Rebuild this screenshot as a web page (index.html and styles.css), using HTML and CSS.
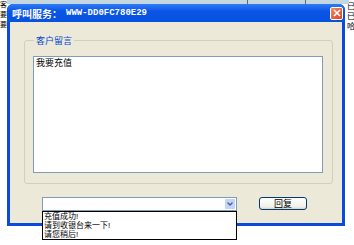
FILE: index.html
```html
<!DOCTYPE html>
<html lang="zh-CN">
<head>
    <meta charset="UTF-8">
    <title>呼叫服务</title>
    <link rel="stylesheet" href="styles.css">
</head>
<body>
    <div class="desk">
        <div class="side side-left">
            <span>客</span><span>要</span><span>要</span>
        </div>
        <div class="middle">
            <div class="grid-head">
                <span class="head-cell head-a"></span>
                <span class="head-cell head-b"></span>
            </div>
            <div class="window">
                <div class="titlebar">
                    <span class="title-cn">呼叫服务：</span>
                    <span class="title-id">WWW-DD0FC780E29</span>
                    <span class="close-btn">
                        <svg width="8" height="8" viewBox="0 0 8 8">
                            <path d="M1 1L7 7M7 1L1 7" stroke="#fff" stroke-width="1.6" fill="none"/>
                        </svg>
                    </span>
                </div>
                <div class="window-body">
                    <fieldset class="group">
                        <legend>客户留言</legend>
                        <div class="message">我要充值</div>
                    </fieldset>
                    <div class="actions">
                        <div class="combo">
                            <span class="combo-arrow">
                                <svg width="6" height="4" viewBox="0 0 6 4">
                                    <path d="M0.5 0.5L3 3L5.5 0.5" stroke="#4d6185" stroke-width="1.3" fill="none"/>
                                </svg>
                            </span>
                            <ul class="combo-list">
                                <li>充值成功!</li>
                                <li>请到收银台来一下!</li>
                                <li>请您稍后!</li>
                            </ul>
                        </div>
                        <button class="reply-btn">回复</button>
                    </div>
                </div>
            </div>
        </div>
        <div class="side side-right">
            <span>已</span><span>已</span><span>哈</span>
        </div>
    </div>
</body>
</html>
```
FILE: styles.css
```css
body {
    margin: 0;
    background: #fff;
    font-family: "Noto Sans CJK SC", "Liberation Sans", sans-serif;
    font-size: 9px;
    color: #000;
}
.desk {
    display: grid;
    grid-template-columns: 7px 340px 1fr;
    height: 245px;
    overflow: hidden;
}
.side {
    display: flex;
    flex-direction: column;
    overflow: hidden;
    font-family: "Liberation Sans", "Noto Sans CJK SC", sans-serif;
    font-size: 7px;
    line-height: 10px;
}
.side-right {
    padding-top: 2px;
    font-size: 8px;
}
.grid-head {
    height: 4px;
    background: #c4d6df;
    position: relative;
    margin-right: -2px;
}
.head-cell {
    position: absolute;
    top: 0;
    width: 1px;
    height: 4px;
    background: #5c6a70;
}
.head-a { left: 240px; }
.head-b { left: 298px; }
.window {
    width: 332px;
    background: #0a4ade;
    border-radius: 6px 6px 0 0;
    padding: 0 3px 3px;
}
.titlebar {
    height: 18px;
    display: flex;
    align-items: center;
    background: linear-gradient(#2d7cf5, #0a55e6 40%, #0852e0);
    margin: 0 -3px;
    padding: 0 3px 0 5px;
    border-radius: 6px 6px 0 0;
    color: #fff;
    font-weight: bold;
}
.title-cn {
    font-size: 10px;
}
.title-id {
    font-family: "Liberation Mono", monospace;
    font-size: 9px;
    margin-left: 4px;
}
.close-btn {
    margin-left: auto;
    margin-right: -1px;
    width: 11px;
    height: 11px;
    border: 1px solid #fff;
    border-radius: 2px;
    background: linear-gradient(135deg, #f08a62, #d9451f);
    display: flex;
    align-items: center;
    justify-content: center;
}
.window-body {
    background: #ece9d8;
    height: 201px;
    padding: 14px 9px 0 14px;
    box-sizing: border-box;
}
.group {
    margin: 0;
    padding: 11px 9px 9px 8px;
    width: 309px;
    height: 148px;
    box-sizing: border-box;
    border: 1px solid #d0d0bf;
    border-radius: 3px;
    min-width: 0;
}
.group legend {
    color: #0046d5;
    padding: 0 2px;
    margin-left: 1px;
    font-size: 9px;
    line-height: 9px;
}
.message {
    background: #fff;
    border: 1px solid #7f9db9;
    height: 117px;
    box-sizing: border-box;
    padding: 1px 2px;
    font-size: 9px;
    line-height: 10px;
}
.actions {
    display: flex;
    align-items: flex-start;
    margin-top: 13px;
    padding-left: 18px;
    gap: 22px;
}
.combo {
    position: relative;
    width: 195px;
    height: 14px;
    box-sizing: border-box;
    background: #fff;
    border: 1px solid #7f9db9;
}
.combo-arrow {
    position: absolute;
    right: 1px;
    top: 1px;
    width: 10px;
    height: 10px;
    background: #c3d4fb;
    border-radius: 1px;
    display: flex;
    align-items: center;
    justify-content: center;
}
.combo-list {
    position: absolute;
    left: -1px;
    top: 13px;
    width: 195px;
    box-sizing: border-box;
    margin: 0;
    padding: 0 0 0 1px;
    list-style: none;
    background: #fff;
    border: 1px solid #000;
    font-family: "Liberation Sans", "Noto Sans CJK SC", sans-serif;
    font-size: 8px;
    line-height: 9px;
}
.reply-btn {
    width: 48px;
    height: 13px;
    padding: 0;
    font-family: inherit;
    font-size: 9px;
    line-height: 9px;
    color: #000;
    border: 1px solid #003c74;
    border-radius: 3px;
    background: linear-gradient(#ffffff, #f0f0ea 80%, #d6d0c5);
}
```
